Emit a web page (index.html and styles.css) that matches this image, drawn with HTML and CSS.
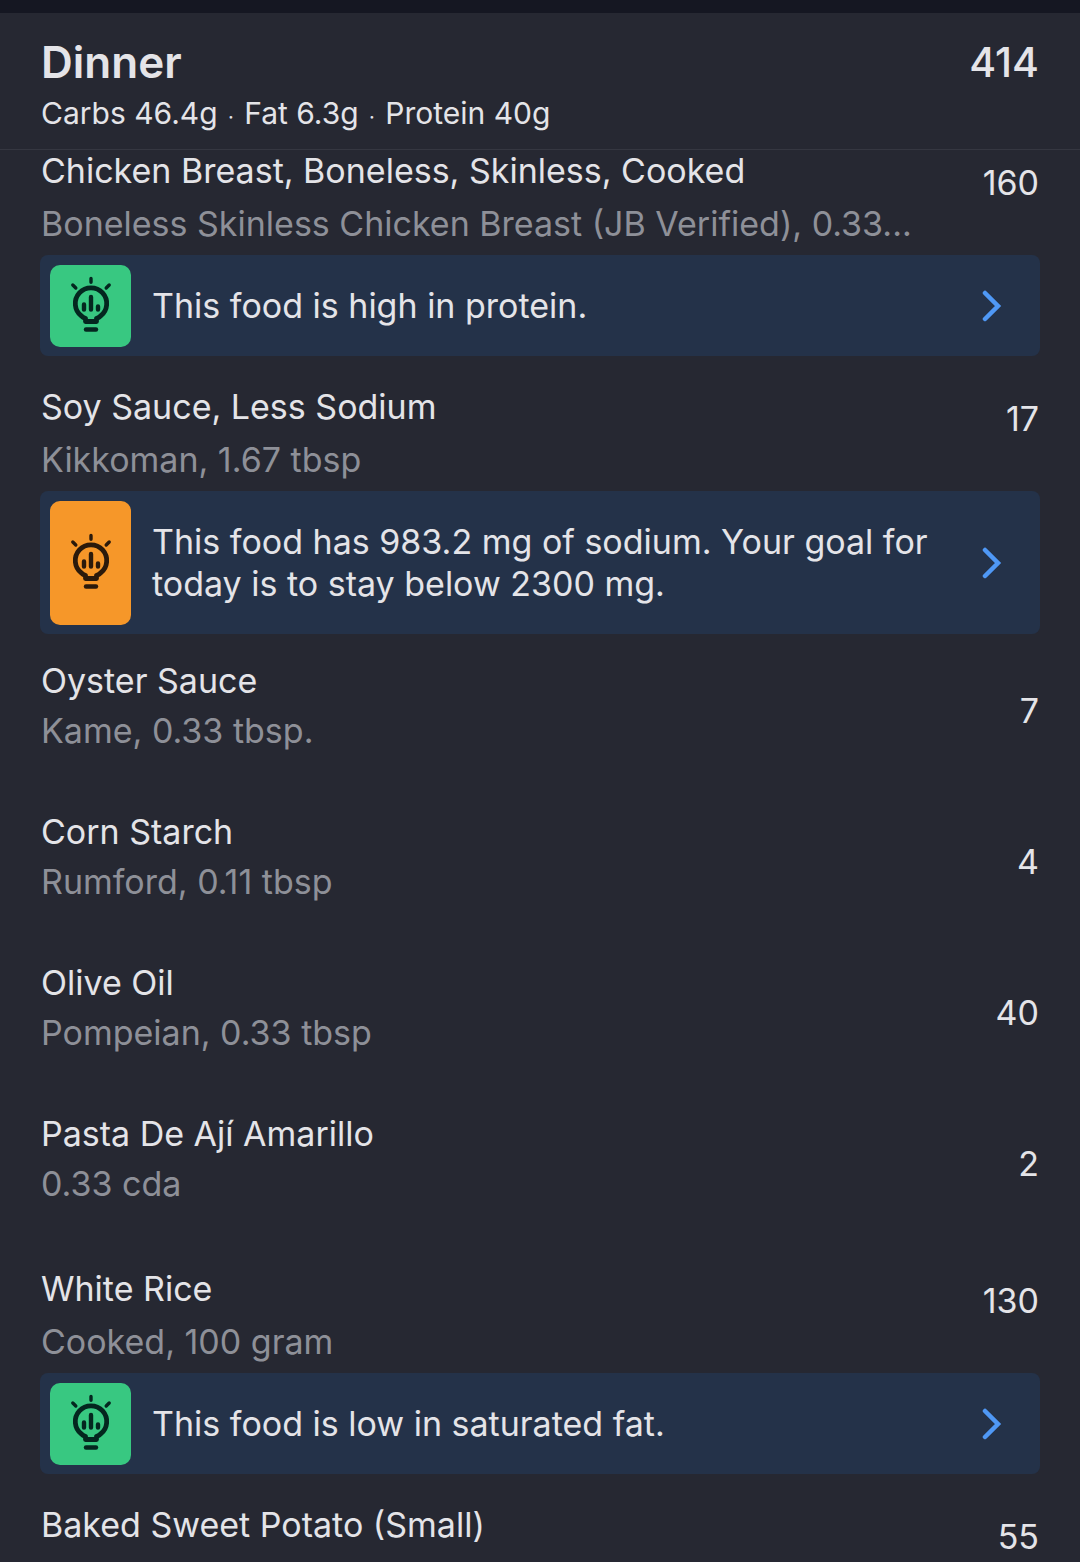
FILE: index.html
```
<!DOCTYPE html>
<html lang="en">

<head>
    <meta charset="UTF-8">
    <meta name="viewport" content="width=device-width, initial-scale=1.0">
    <title>Dinner</title>
    <link rel="stylesheet" href="styles.css">
</head>

<body>
    <!-- shared icons -->
    <svg class="sprite" aria-hidden="true">
        <symbol id="bulb" viewBox="0 0 44 60">
            <g fill="none" stroke="currentColor" stroke-width="4.800" stroke-linecap="round" stroke-linejoin="round">
                <path d="M16.500 45.500v-3c-1-.500-2.500-1-4-2.500a15.700 15.700 0 1 1 19 0c-1.500 1.500-3 2-4 2.500v3z" />
                <path d="M22 2.500v3.800M3.800 9l3 3M40.200 9l-3 3" stroke-width="3.400" />
                <path d="M15 28.500V33.500M22 21v12.500M29 30.500v3" stroke-width="4.400" />
                <path d="M17 53.500h10" stroke-width="4.400" />
            </g>
        </symbol>
        <symbol id="chevron" viewBox="0 0 20 32">
            <path d="M3 3l13 13L3 29" fill="none" stroke="currentColor" stroke-width="4.500" stroke-linecap="round" />
        </symbol>
    </svg>

    <header class="meal-header">
        <div class="meal-title">
            <h1>Dinner</h1>
            <span class="total">414</span>
        </div>
        <p class="macros">Carbs 46.4g <span class="dot">·</span> Fat 6.3g <span class="dot">·</span> Protein 40g</p>
    </header>

    <ul class="food-list">
        <li class="food has-insight">
            <div class="row">
                <div class="info">
                    <h2>Chicken Breast, Boneless, Skinless, Cooked</h2>
                    <p>Boneless Skinless Chicken Breast (JB Verified), 0.33...</p>
                </div>
                <span class="calories">160</span>
            </div>
            <a class="insight" href="#">
                <span class="badge green"><svg><use href="#bulb" /></svg></span>
                <span class="message">This food is high in protein.</span>
                <svg class="chevron"><use href="#chevron" /></svg>
            </a>
        </li>
        <li class="food has-insight">
            <div class="row">
                <div class="info">
                    <h2>Soy Sauce, Less Sodium</h2>
                    <p>Kikkoman, 1.67 tbsp</p>
                </div>
                <span class="calories">17</span>
            </div>
            <a class="insight" href="#">
                <span class="badge orange"><svg><use href="#bulb" /></svg></span>
                <span class="message">This food has 983.2 mg of sodium. Your goal for today is to stay below 2300 mg.</span>
                <svg class="chevron"><use href="#chevron" /></svg>
            </a>
        </li>
        <li class="food">
            <div class="row">
                <div class="info">
                    <h2>Oyster Sauce</h2>
                    <p>Kame, 0.33 tbsp.</p>
                </div>
                <span class="calories">7</span>
            </div>
        </li>
        <li class="food">
            <div class="row">
                <div class="info">
                    <h2>Corn Starch</h2>
                    <p>Rumford, 0.11 tbsp</p>
                </div>
                <span class="calories">4</span>
            </div>
        </li>
        <li class="food">
            <div class="row">
                <div class="info">
                    <h2>Olive Oil</h2>
                    <p>Pompeian, 0.33 tbsp</p>
                </div>
                <span class="calories">40</span>
            </div>
        </li>
        <li class="food">
            <div class="row">
                <div class="info">
                    <h2>Pasta De Ají Amarillo</h2>
                    <p>0.33 cda</p>
                </div>
                <span class="calories">2</span>
            </div>
        </li>
        <li class="food has-insight">
            <div class="row">
                <div class="info">
                    <h2>White Rice</h2>
                    <p>Cooked, 100 gram</p>
                </div>
                <span class="calories">130</span>
            </div>
            <a class="insight" href="#">
                <span class="badge green"><svg><use href="#bulb" /></svg></span>
                <span class="message">This food is low in saturated fat.</span>
                <svg class="chevron"><use href="#chevron" /></svg>
            </a>
        </li>
        <li class="food has-insight">
            <div class="row">
                <div class="info">
                    <h2>Baked Sweet Potato (Small)</h2>
                </div>
                <span class="calories">55</span>
            </div>
        </li>
    </ul>
</body>

</html>
```
FILE: styles.css
```
* {
    margin: 0;
    padding: 0;
    box-sizing: border-box;
}

body {
    background: #262832;
    color: #e4e4e8;
    font-family: Inter, "Liberation Sans", sans-serif;
    font-size: 34px;
}

.sprite {
    display: none;
}

/* header */
.meal-header {
    position: sticky;
    top: 0;
    z-index: 1;
    padding: 23px 41px 11px;
    background: #262832;
    border-top: 13px solid #151722;
    border-bottom: 1px solid #353741;
}

.meal-title {
    display: flex;
    justify-content: space-between;
    align-items: center;
}

.meal-title h1 {
    font-size: 44px;
    font-weight: 600;
    line-height: 52px;
}

.total {
    font-size: 41px;
    font-weight: 500;
    line-height: 52px;
}

.macros {
    font-size: 30px;
    line-height: 50px;
}

.dot {
    margin: 0 2px;
    font-size: 20px;
    line-height: 1;
}

/* the list starts slightly under the header */
.food-list {
    margin-top: -29px;
    padding: 0 40px;
    list-style: none;
}

.row {
    display: flex;
    align-items: center;
    min-height: 151px;
    padding: 0 1px;
}

.info {
    flex: 1;
    min-width: 0;
    padding-bottom: 9px;
}

.info h2,
.info p {
    font-size: 34px;
    font-weight: 400;
    line-height: 50px;
    white-space: nowrap;
}

.info p {
    color: #8e9098;
}

.has-insight {
    padding-bottom: 1px;
}

.has-insight .row {
    align-items: flex-start;
    min-height: 0;
    padding-top: 23px;
}

.has-insight .info {
    padding-bottom: 5px;
}

.has-insight .info h2,
.has-insight .info p,
.calories {
    line-height: 53px;
}

.has-insight .calories {
    padding-top: 12px;
}

/* insight card */
.insight {
    display: flex;
    align-items: center;
    padding: 10px 38px 9px 10px;
    border-radius: 8px;
    background: #243249;
    color: inherit;
    text-decoration: none;
}

.badge {
    display: flex;
    align-items: center;
    justify-content: center;
    align-self: stretch;
    width: 81px;
    border-radius: 10px;
}

.badge svg {
    width: 44px;
    height: 60px;
}

.green {
    background: #38c881;
    color: #04271f;
}

.orange {
    background: #f69729;
    color: #2b1a0b;
}

.message {
    flex: 1;
    padding: 20px 21px;
    line-height: 42px;
}

.chevron {
    width: 20px;
    height: 32px;
    color: #4f98f5;
}
```
